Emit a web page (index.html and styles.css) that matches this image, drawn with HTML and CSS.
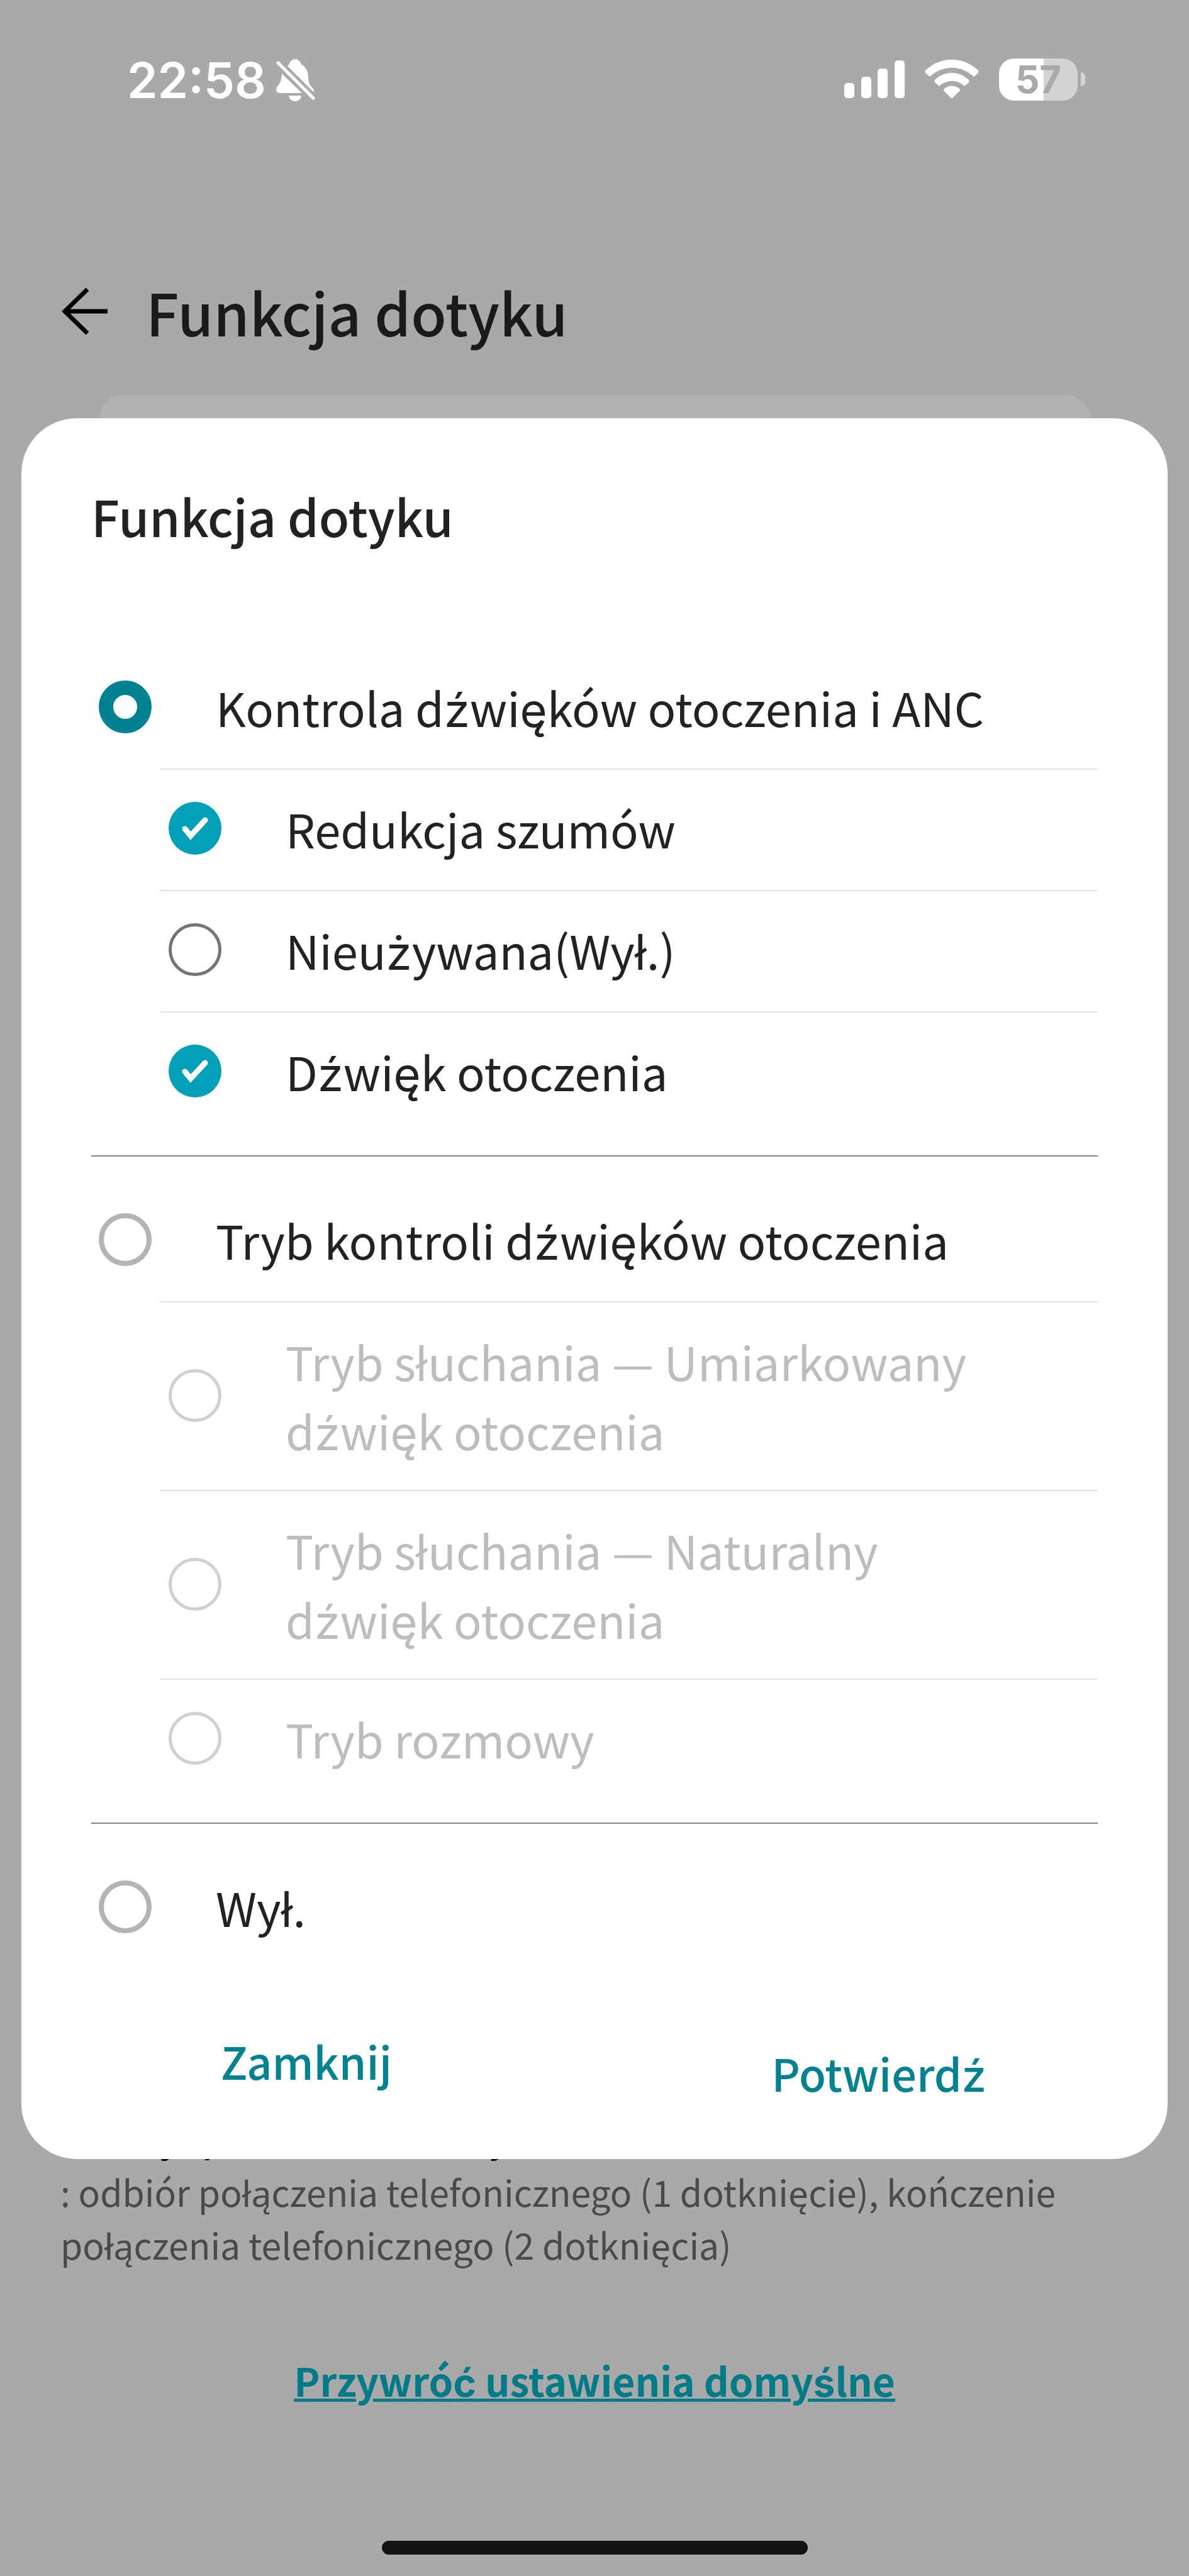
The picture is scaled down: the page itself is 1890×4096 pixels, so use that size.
FILE: index.html
```html
<!DOCTYPE html>
<html lang="pl">
<head>
  <meta charset="UTF-8">
  <meta name="viewport" content="width=device-width, initial-scale=1">
  <title>Funkcja dotyku</title>
  <link rel="stylesheet" href="styles.css">
</head>
<body>
  <div class="statusbar">
    <div class="status-left">
      <span class="clock">22:58</span>
      <svg class="bell" viewBox="0 0 62 68" fill="#fff" aria-hidden="true">
        <path d="M18 11 C20 10 20 8 21 7 C23 2 26 0 30 0 C35 0 38 3 40 8 C41 10 43 10 45 12 C50 18 51 24 51 30 C52 40 53 40 56 44 C60 48 61 50 59 52 Z"/>
        <path d="M9 23 L41 54 L5 54 C1 54 -1 50 1 45 C3 41 8 40 9 23 Z"/>
        <path d="M20 58 L40 58 C39 64 35 67 30 67 C25 67 21 64 20 58 Z"/>
        <path d="M3 6 L59 62" stroke="#fff" stroke-width="5" stroke-linecap="round"/>
      </svg>
    </div>
    <div class="status-right">
      <svg class="signal" viewBox="0 0 96 60" fill="#fff" aria-hidden="true">
        <rect x="0" y="36" width="16" height="24" rx="5"/>
        <rect x="27" y="26" width="16" height="34" rx="5"/>
        <rect x="53" y="13" width="16" height="47" rx="5"/>
        <rect x="80" y="0" width="16" height="60" rx="5"/>
      </svg>
      <svg class="wifi" viewBox="0 0 86 62" fill="#fff" aria-hidden="true">
        <path d="M1 17 C25 -6 61 -6 85 17 Q86 19 85 21 L78 27 C58 8 28 8 8 27 L1 21 Q0 19 1 17 Z"/>
        <path d="M16 32 C32 17 54 17 70 32 Q71 34 70 36 L63 42 C51 31 35 31 23 42 L16 36 Q15 34 16 32 Z"/>
        <path d="M31 46 C38 40 48 40 55 46 Q57 48 55 50 L43 62 L31 50 Q29 48 31 46 Z"/>
      </svg>
      <div class="battery"><span class="battery-body">57</span><span class="battery-cap"></span></div>
    </div>
  </div>

  <header class="topbar">
    <button class="back" aria-label="Wstecz">
      <svg viewBox="0 0 73 76" fill="none" stroke="#000" stroke-width="7" aria-hidden="true">
        <path d="M73 38 H5 M41 3 L5 38 L41 73"/>
      </svg>
    </button>
    <h1>Funkcja dotyku</h1>
  </header>

  <main class="page">
    <div class="card"></div>

    <form class="dialog" role="dialog" aria-labelledby="dialogTitle">
      <h2 id="dialogTitle">Funkcja dotyku</h2>

      <section class="group first">
        <label class="row"><input type="radio" name="mode" checked><span>Kontrola d<span class="pl">ź</span>wi<span class="pl">ę</span>ków otoczenia i ANC</span></label>
        <label class="row sub"><input type="checkbox" checked><span>Redukcja szumów</span></label>
        <label class="row sub"><input type="checkbox"><span>Nieu<span class="pl">ż</span>ywana(Wył.)</span></label>
        <label class="row sub"><input type="checkbox" checked><span>D<span class="pl">ź</span>wi<span class="pl">ę</span>k otoczenia</span></label>
      </section>

      <section class="group">
        <label class="row"><input type="radio" name="mode"><span>Tryb kontroli d<span class="pl">ź</span>wi<span class="pl">ę</span>ków otoczenia</span></label>
        <label class="row sub tall"><input type="checkbox" disabled><span>Tryb słuchania — Umiarkowany d<span class="pl">ź</span>wi<span class="pl">ę</span>k otoczenia</span></label>
        <label class="row sub tall"><input type="checkbox" disabled><span>Tryb słuchania — Naturalny d<span class="pl">ź</span>wi<span class="pl">ę</span>k otoczenia</span></label>
        <label class="row sub"><input type="checkbox" disabled><span>Tryb rozmowy</span></label>
      </section>

      <section class="group">
        <label class="row"><input type="radio" name="mode"><span>Wył.</span></label>
      </section>

      <div class="dialog-buttons">
        <button type="button">Zamknij</button>
        <button type="button" class="confirm">Potwierd<span class="pl">ź</span></button>
      </div>
    </form>

    <p class="hint-title">Funkcja podczas rozmowy</p>
    <p class="hint">: odbiór połączenia telefonicznego (1 dotknięcie), kończenie połączenia telefonicznego (2 dotknięcia)</p>
    <a href="#" class="reset">Przywró<span class="pl">ć</span> ustawienia domy<span class="pl">ś</span>lne</a>
  </main>

  <div class="home-indicator"></div>
</body>
</html>
```
FILE: styles.css
```css
* {
  box-sizing: border-box;
}

body {
  margin: 0;
  min-height: 100vh;
  display: flex;
  flex-direction: column;
  background: #a9a9a9;
  color: #222;
  font-family: "Noto Sans CJK KR", "Noto Sans", sans-serif;
}

h1, h2, p {
  margin: 0;
  font-weight: 500;
}

.pl {
  font-family: Inter, sans-serif;
  line-height: 1;
}

.statusbar {
  display: flex;
  justify-content: space-between;
  padding: 78px 165px 0 202px;
  height: 420px;
  color: #fff;
  font-family: Inter, sans-serif;
}

.status-left, .status-right {
  display: flex;
  align-items: center;
  height: 96px;
}

.status-left {
  height: 100px;
}

.clock {
  font-size: 78px;
  font-weight: 600;
  line-height: 96px;
}

.bell {
  width: 62px;
  height: 68px;
  margin-left: 16px;
}

.signal {
  width: 96px;
  height: 60px;
}

.wifi {
  width: 86px;
  height: 62px;
  margin: 0 32px;
}

.battery {
  display: flex;
  align-items: center;
  gap: 5px;
}

.battery-body {
  width: 125px;
  height: 67px;
  border-radius: 24px;
  background: linear-gradient(to right, #fff 57%, #d4d4d4 57%);
  color: #a9a9a9;
  font-size: 60px;
  font-weight: 700;
  line-height: 67px;
  text-align: center;
}

.battery-cap {
  width: 7px;
  height: 22px;
  border-radius: 0 7px 7px 0;
  background: #d4d4d4;
}

.topbar {
  display: flex;
  align-items: center;
  height: 150px;
  padding-left: 98px;
}

.topbar h1 {
  color: #1a1a1a;
  font-size: 92px;
  line-height: 150px;
}

button {
  padding: 0;
  border: none;
  background: none;
  font-family: inherit;
  cursor: pointer;
}

.back {
  width: 73px;
  height: 76px;
  margin-right: 61px;
}

.back svg {
  display: block;
}

.page {
  display: flex;
  flex-direction: column;
  flex: 1;
  padding: 58px 34px 0;
}

/* card of the page below, mostly hidden by the dialog */
.card {
  height: 80px;
  margin: 0 123px -43px;
  border-radius: 40px 40px 0 0;
  background: #b2b2b2;
}

.dialog {
  position: relative;
  padding: 100px 111px 82px;
  border-radius: 88px;
  background: #fff;
}

.dialog h2 {
  font-size: 79px;
  line-height: 110px;
  margin-bottom: 154px;
}

.group {
  border-bottom: 2px solid #858585;
  padding: 37px 0 36px;
}

.group.first {
  padding-top: 0;
}

.group:last-of-type {
  border-bottom: none;
}

.row {
  display: flex;
  align-items: center;
  height: 193px;
  padding: 0 0 3px 12px;
  font-size: 74px;
  line-height: 110px;
}

.row.sub {
  margin-left: 109px;
  padding: 0 120px 6px 14px;
  border-top: 2px solid #e4e4e4;
}

.row.tall {
  height: 300px;
  padding-bottom: 3px;
}

.row input {
  appearance: none;
  flex: none;
  width: 84px;
  height: 84px;
  margin: 0 102px 0 0;
  border: 8px solid #b4b4b4;
  border-radius: 50%;
}

.row input[type="radio"]:checked {
  border: 23px solid #008291;
}

.row input[type="checkbox"] {
  border: 5px solid #757575;
}

.row input[type="checkbox"]:checked {
  border: none;
  background: #00a0b8 url("data:image/svg+xml,%3Csvg xmlns='http://www.w3.org/2000/svg' viewBox='0 0 84 84'%3E%3Cpath d='M26 43L35 54L58 29' fill='none' stroke='%23fff' stroke-width='9' stroke-linecap='round'/%3E%3C/svg%3E") center / 84px no-repeat;
}

.row input[type="checkbox"]:disabled {
  border-color: #d0d0d0;
}

.row input:disabled + span {
  color: #bdbdbd;
}

.dialog-buttons {
  display: flex;
  justify-content: space-between;
  align-items: flex-end;
  padding: 56px 177px 0 206px;
}

.dialog-buttons button {
  color: #008291;
  font-size: 70px;
  font-weight: 500;
  line-height: 110px;
  margin-bottom: 19px;
}

.dialog-buttons .confirm {
  margin: 19px 0 0;
}

.hint-title {
  margin-top: -78px;
  padding: 0 62px;
  color: #000;
  font-size: 57px;
  line-height: 84px;
}

.hint {
  padding: 3px 62px 0;
  color: #4a4a4a;
  font-size: 57px;
  font-weight: 400;
  line-height: 84px;
}

.reset {
  align-self: center;
  margin-top: 129px;
  color: #007b87;
  font-size: 62px;
  font-weight: 700;
  line-height: 90px;
  text-decoration-thickness: 5px;
}

.home-indicator {
  width: 677px;
  height: 22px;
  margin: 0 auto 34px;
  border-radius: 11px;
  background: #131313;
}
```
